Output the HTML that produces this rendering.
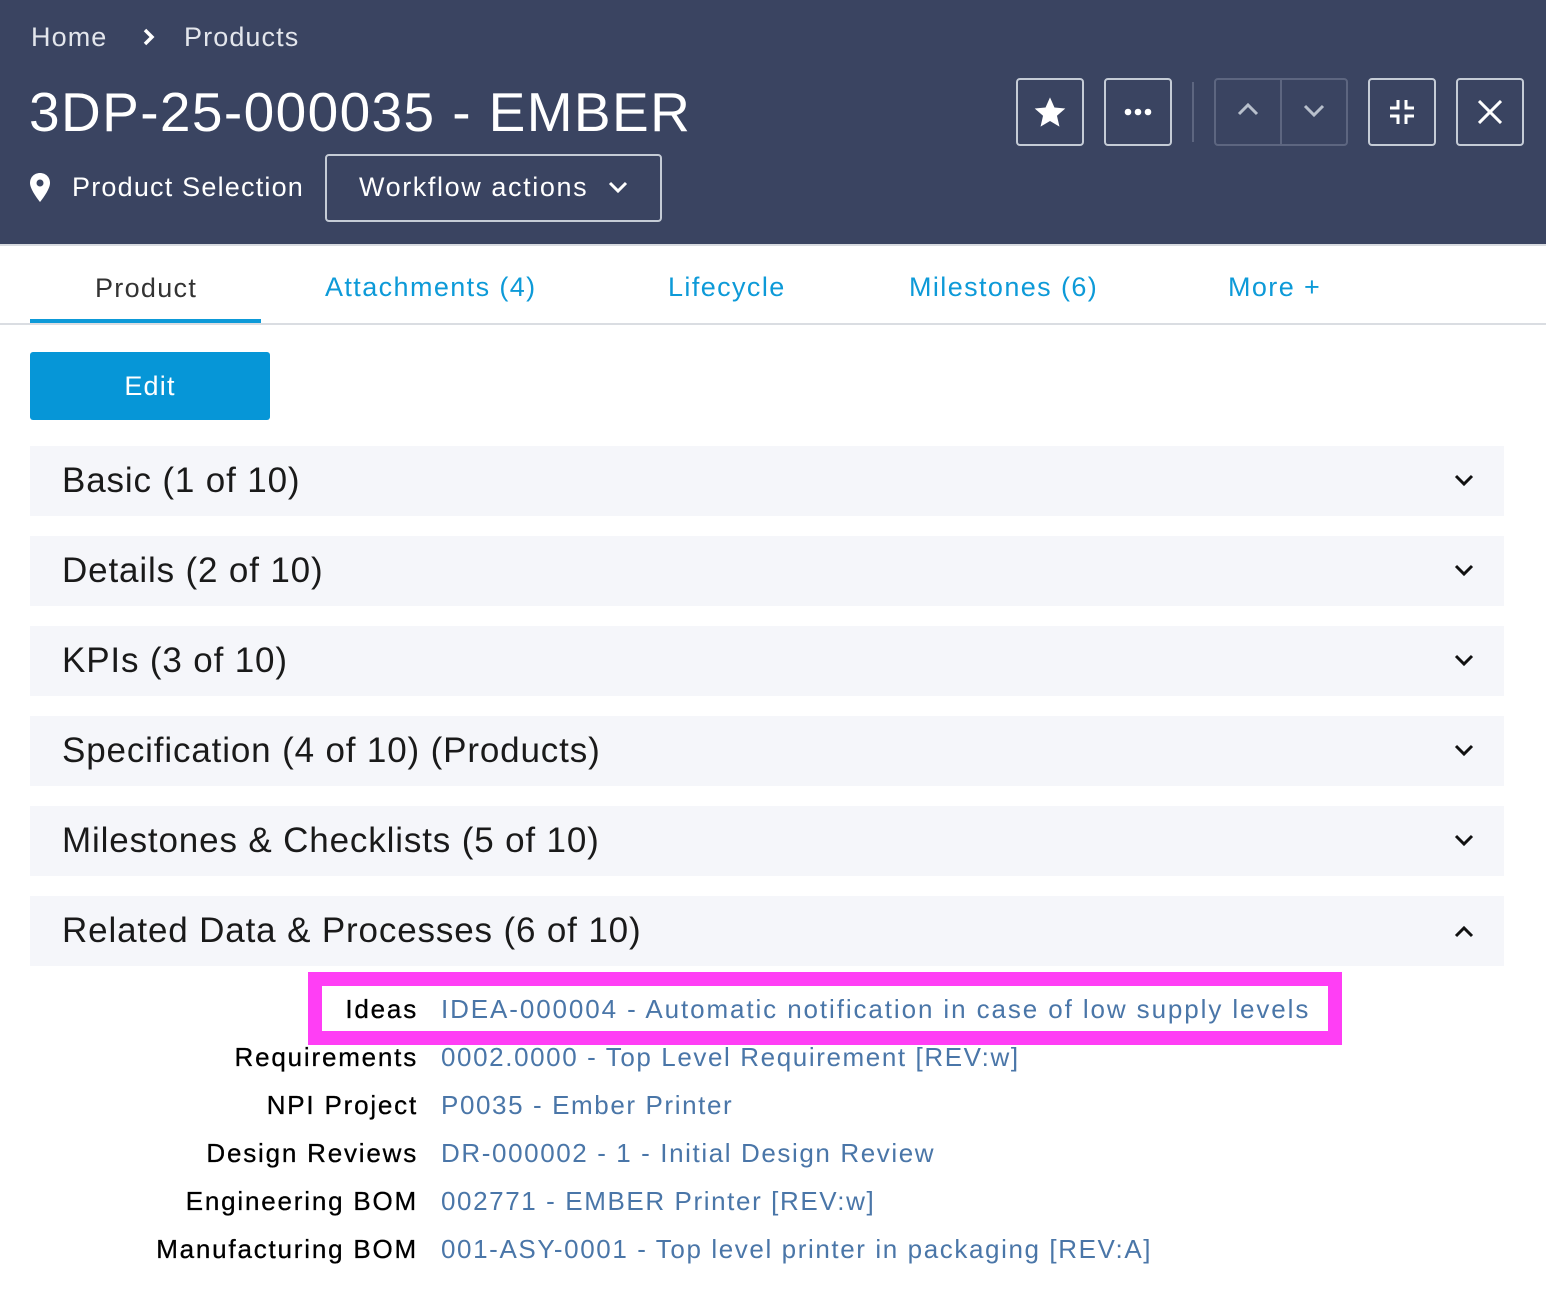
<!DOCTYPE html>
<html><head><style>
*{margin:0;padding:0;box-sizing:border-box}
body{width:1546px;height:1292px;background:#fff;font-family:"Liberation Sans",sans-serif;position:relative;overflow:hidden}
.hdr{position:absolute;left:0;top:0;width:1546px;height:246px;background:#3a4461;border-bottom:2px solid #d8dbe0}
.a{position:absolute;white-space:nowrap}
.btn{position:absolute;top:78px;width:68px;height:68px;border:2px solid #c5ccd6;border-radius:4px;display:flex;align-items:center;justify-content:center}
.sec{position:absolute;left:30px;width:1474px;height:70px;background:#f5f6fa}
.sec span{position:absolute;left:32px;top:15px;font-size:35px;color:#1a1a1a;letter-spacing:.85px}
.sec svg{position:absolute;right:30px;top:28px}
.tab{position:absolute;top:272px;font-size:27px;color:#0d9ad8;letter-spacing:1.4px}
.lab{position:absolute;right:1128px;font-size:26px;color:#000;text-align:right;white-space:nowrap;letter-spacing:1.8px;-webkit-text-stroke:.3px #000}
.val{position:absolute;left:441px;font-size:26px;color:#4a76a8;white-space:nowrap;letter-spacing:1.6px}
</style></head><body>
<div class="hdr">
 <div class="a" style="left:31px;top:22px;font-size:27px;color:#e3e6ec;letter-spacing:1.1px">Home</div>
 <svg class="a" style="left:142px;top:28px" width="14" height="18" viewBox="0 0 14 18"><path d="M3 2l7 7-7 7" stroke="#fff" stroke-width="3.5" fill="none"/></svg>
 <div class="a" style="left:184px;top:22px;font-size:27px;color:#e3e6ec;letter-spacing:1.1px">Products</div>
 <div class="a" style="left:29px;top:80px;font-size:55px;color:#fff;letter-spacing:1.4px">3DP-25-000035 - EMBER</div>
 <svg class="a" style="left:29px;top:172px" width="22" height="32" viewBox="0 0 22 32"><path d="M11 1C5 1 1 5.5 1 11c0 7 10 19 10 19s10-12 10-19C21 5.5 17 1 11 1z" fill="#fff"/><circle cx="11" cy="11" r="3.5" fill="#3a4461"/></svg>
 <div class="a" style="left:72px;top:172px;font-size:27px;color:#fff;letter-spacing:1.2px">Product Selection</div>
 <div class="a" style="left:325px;top:154px;width:337px;height:68px;border:2px solid #c5ccd6;border-radius:4px"></div>
 <div class="a" style="left:359px;top:172px;font-size:27px;color:#fff;letter-spacing:1.6px">Workflow actions</div>
 <svg class="a" style="left:608px;top:180px" width="20" height="14" viewBox="0 0 20 14"><path d="M2 3l8 8 8-8" stroke="#fff" stroke-width="3" fill="none"/></svg>
 <div class="btn" style="left:1016px"><svg width="34" height="32" viewBox="0 0 24 23"><path d="M12 1l3.2 7.3 7.8.7-6 5.2 1.8 7.8L12 18l-6.8 4 1.8-7.8-6-5.2 7.8-.7z" fill="#fff"/></svg></div>
 <div class="btn" style="left:1104px"><svg width="28" height="8"><circle cx="4" cy="4" r="3.3" fill="#fff"/><circle cx="14" cy="4" r="3.3" fill="#fff"/><circle cx="24" cy="4" r="3.3" fill="#fff"/></svg></div>
 <div class="a" style="left:1192px;top:82px;width:2px;height:60px;background:#5d6680"></div>
 <div class="a" style="left:1214px;top:78px;width:134px;height:68px;border:2px solid #5d6680;border-radius:4px"></div>
 <div class="a" style="left:1280px;top:80px;width:2px;height:64px;background:#5d6680"></div>
 <svg class="a" style="left:1237px;top:102px" width="22" height="14"><path d="M2 12l9-9 9 9" stroke="#b8c0cc" stroke-width="3" fill="none"/></svg>
 <svg class="a" style="left:1303px;top:104px" width="22" height="14"><path d="M2 2l9 9 9-9" stroke="#b8c0cc" stroke-width="3" fill="none"/></svg>
 <div class="btn" style="left:1368px"><svg width="24" height="24" viewBox="0 0 24 24" stroke="#fff" stroke-width="3" fill="none"><path d="M8 0v8H0M16 0v8h8M8 24v-8H0M16 24v-8h8"/></svg></div>
 <div class="btn" style="left:1456px"><svg width="24" height="24" stroke="#fff" stroke-width="3"><path d="M1 1l22 22M23 1L1 23"/></svg></div>
</div>
<div class="a" style="left:95px;top:273px;font-size:27px;color:#333;letter-spacing:1.3px">Product</div>
<div class="a" style="left:30px;top:319px;width:231px;height:5px;background:#0d9ad8"></div>
<div class="tab" style="left:325px">Attachments (4)</div>
<div class="tab" style="left:668px">Lifecycle</div>
<div class="tab" style="left:909px">Milestones (6)</div>
<div class="tab" style="left:1228px">More +</div>
<div class="a" style="left:0;top:323px;width:1546px;height:2px;background:#dadde2"></div>
<div class="a" style="left:30px;top:352px;width:240px;height:68px;background:#0696d7;border-radius:3px;color:#fff;font-size:27px;text-align:center;line-height:68px;letter-spacing:1.2px">Edit</div>
<div class="sec" style="top:446px"><span>Basic (1 of 10)</span><svg width="20" height="14"><path d="M2 2l8 8 8-8" stroke="#111" stroke-width="3" fill="none"/></svg></div>
<div class="sec" style="top:536px"><span>Details (2 of 10)</span><svg width="20" height="14"><path d="M2 2l8 8 8-8" stroke="#111" stroke-width="3" fill="none"/></svg></div>
<div class="sec" style="top:626px"><span>KPIs (3 of 10)</span><svg width="20" height="14"><path d="M2 2l8 8 8-8" stroke="#111" stroke-width="3" fill="none"/></svg></div>
<div class="sec" style="top:716px"><span>Specification (4 of 10) (Products)</span><svg width="20" height="14"><path d="M2 2l8 8 8-8" stroke="#111" stroke-width="3" fill="none"/></svg></div>
<div class="sec" style="top:806px"><span>Milestones &amp; Checklists (5 of 10)</span><svg width="20" height="14"><path d="M2 2l8 8 8-8" stroke="#111" stroke-width="3" fill="none"/></svg></div>
<div class="sec" style="top:896px"><span>Related Data &amp; Processes (6 of 10)</span><svg width="20" height="14"><path d="M2 12l8-8 8 8" stroke="#111" stroke-width="3" fill="none"/></svg></div>
<div class="a" style="left:308px;top:972px;width:1034px;height:73px;border:14px solid #ff3ef5"></div>
<div class="lab" style="top:994px">Ideas</div><div class="val" style="top:994px;letter-spacing:1.9px">IDEA-000004 - Automatic notification in case of low supply levels</div>
<div class="lab" style="top:1042px">Requirements</div><div class="val" style="top:1042px">0002.0000 - Top Level Requirement [REV:w]</div>
<div class="lab" style="top:1090px">NPI Project</div><div class="val" style="top:1090px">P0035 - Ember Printer</div>
<div class="lab" style="top:1138px">Design Reviews</div><div class="val" style="top:1138px">DR-000002 - 1 - Initial Design Review</div>
<div class="lab" style="top:1186px">Engineering BOM</div><div class="val" style="top:1186px">002771 - EMBER Printer [REV:w]</div>
<div class="lab" style="top:1234px">Manufacturing BOM</div><div class="val" style="top:1234px">001-ASY-0001 - Top level printer in packaging [REV:A]</div>
</body></html>
